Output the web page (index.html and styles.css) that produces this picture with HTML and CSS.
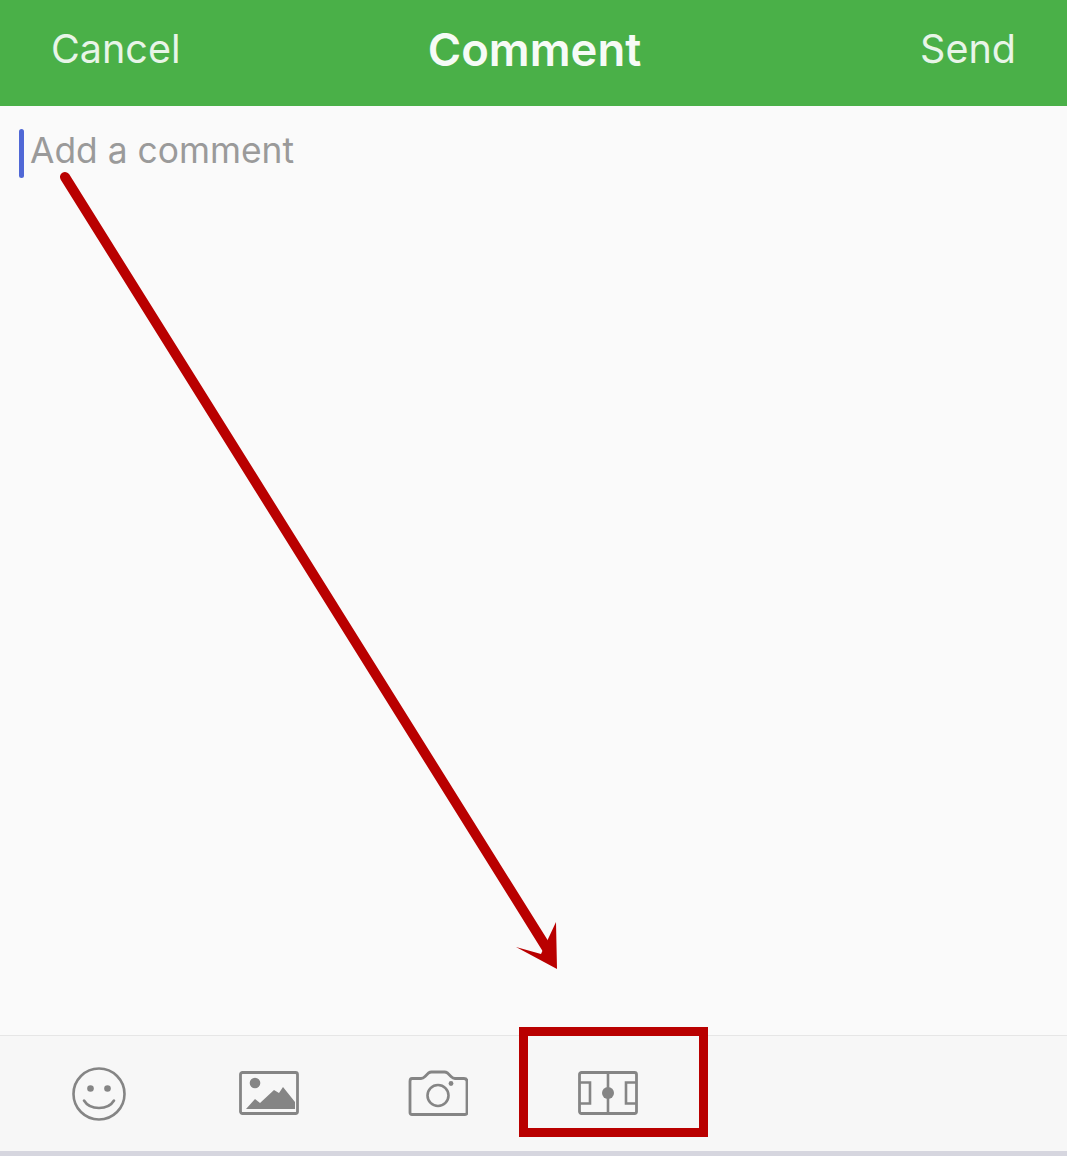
FILE: index.html
```html
<!DOCTYPE html>
<html lang="en">

<head>
    <meta charset="UTF-8">
    <meta name="viewport" content="width=device-width, initial-scale=1.0">
    <title>Comment</title>
    <link rel="stylesheet" href="styles.css">
</head>

<body>
    <div class="screen">
        <nav class="navbar">
            <span class="nav-action">Cancel</span>
            <strong class="nav-title">Comment</strong>
            <span class="nav-action nav-action-right">Send</span>
        </nav>

        <section class="editor">
            <span class="caret"></span>
            <span class="placeholder">Add a comment</span>
        </section>

        <div class="toolbar">
            <svg class="tool" viewBox="0 0 60 60">
                <circle cx="30" cy="30" r="25.5" fill="none" stroke="#858585" stroke-width="2.6" />
                <circle cx="21.5" cy="24.5" r="3.3" fill="#858585" />
                <circle cx="38.5" cy="24.5" r="3.3" fill="#858585" />
                <path d="M15 36.5c3 5 8.5 7.5 15 7.5s12-2.5 15-7.5" fill="none" stroke="#858585" stroke-width="2.6" stroke-linecap="round" />
            </svg>
            <svg class="tool" viewBox="0 0 60 60">
                <rect x="1.5" y="8.5" width="57" height="41" rx="2" fill="none" stroke="#858585" stroke-width="2.8" />
                <circle cx="16" cy="19" r="5.3" fill="#858585" />
                <path d="M7 45l9-10 5 4 14-13 5 3 4-6 12 15v7z" fill="#858585" />
            </svg>
            <svg class="tool" viewBox="0 0 60 60">
                <path d="M4 14.5h9q2 0 4-2l3.5-3.5q1.5-1 3-1h13q1.5 0 3 1l3.5 3.5q2 2 4 2h9q3 0 3 3v31q0 2-2 2h-53q-2 0-2-2v-31q0-3 2-3z" fill="none" stroke="#858585" stroke-width="2.8" stroke-linejoin="round" />
                <circle cx="30" cy="31.5" r="10.5" fill="none" stroke="#858585" stroke-width="2.6" />
                <circle cx="43" cy="19.5" r="2.4" fill="#858585" />
            </svg>
            <svg class="tool" viewBox="0 0 60 60">
                <rect x="1.5" y="8.5" width="57" height="41" rx="2" fill="none" stroke="#858585" stroke-width="2.8" />
                <path d="M30 8v42M1 18.5h11v21H1M59 18.5H48v21h11" fill="none" stroke="#858585" stroke-width="2.6" />
                <circle cx="30" cy="29" r="6" fill="#858585" />
            </svg>
        </div>

        <div class="home-strip"></div>

        <!-- annotation on top of the screenshot -->
        <svg class="arrow" viewBox="0 0 1067 1156">
            <line x1="65" y1="177" x2="551" y2="955" stroke="#b90000" stroke-width="10" stroke-linecap="round" />
            <path d="M557 969L516 947 541 954 556 922 Z" fill="#b90000" />
        </svg>
        <div class="highlight"></div>
    </div>
</body>

</html>
```

FILE: styles.css
```css
body {
    margin: 0;
    padding: 0;
    background-color: #fafafa;
    font-family: Inter, "Liberation Sans", sans-serif;
}

.screen {
    position: relative;
    display: flex;
    flex-direction: column;
    height: 1156px;
    overflow: hidden;
}

.navbar {
    display: grid;
    grid-template-columns: 1fr auto 1fr;
    align-items: center;
    height: 106px;
    padding: 0 51px 8px;
    box-sizing: border-box;
    background-color: #4ab048;
    color: #e8f5e8;
    flex-shrink: 0;
}

.nav-action {
    font-size: 39.5px;
    font-weight: 400;
}

.nav-action-right {
    text-align: right;
}

.nav-title {
    padding-left: 2px;
    color: #f6fbf6;
    font-size: 45.4px;
    font-weight: 600;
}

.editor {
    display: flex;
    flex: 1;
    align-items: flex-start;
    padding: 23px 19px 0;
    gap: 6px;
    background-color: #fafafa;
}

.caret {
    width: 5px;
    height: 49px;
    border-radius: 3px;
    background-color: #5068d6;
}

.placeholder {
    color: #9a9a9a;
    font-size: 35.4px;
    line-height: 44px;
}

.toolbar {
    display: flex;
    align-items: center;
    gap: 109.5px;
    height: 115px;
    padding-left: 69px;
    border-top: 1px solid #e6e6e6;
    background-color: #f7f7f7;
    flex-shrink: 0;
}

.tool {
    width: 60px;
    height: 60px;
}

.home-strip {
    height: 5px;
    background-color: #d6d6df;
    flex-shrink: 0;
}

.arrow {
    position: absolute;
    top: 0;
    left: 0;
    width: 1067px;
    height: 1156px;
}

.highlight {
    position: absolute;
    top: 1027px;
    left: 519px;
    width: 189px;
    height: 110px;
    box-sizing: border-box;
    border: 9px solid #b90000;
}
```
